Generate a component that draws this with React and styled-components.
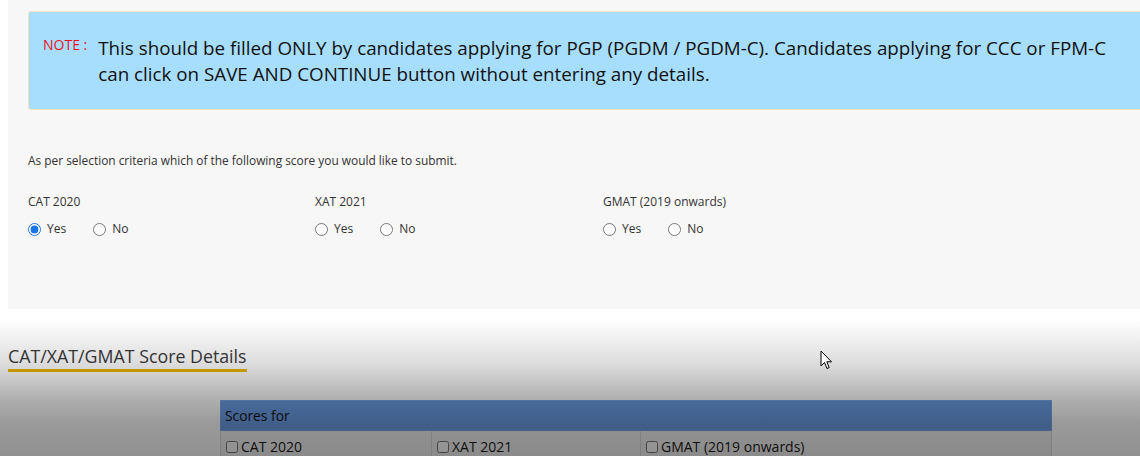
import React from "react";
import styled, { createGlobalStyle } from "styled-components";

const Global = createGlobalStyle`
  html, body { margin: 0; padding: 0; background: #fff; overflow: hidden; }
  body { font-family: "Open Sans", "Liberation Sans", sans-serif; width: 1140px; height: 456px; }
`;

const Page = styled.div`
  position: relative;
  width: 1140px;
  height: 456px;
  overflow: hidden;
  padding-left: 8px;
  box-sizing: border-box;
`;

const Panel = styled.section`
  width: 1160px;
  height: 309px;
  background: #f7f7f7;
  padding: 11px 0 0 20px;
  box-sizing: border-box;
`;

const Note = styled.div`
  width: 1130px;
  height: 99px;
  box-sizing: border-box;
  background: #a8defd;
  border: 1px solid #f3e3c4;
  border-radius: 3px;
  display: flex;
  padding: 23px 0 0 14px;
  gap: 11px;
`;

const NoteLabel = styled.span`
  color: #e8101c;
  font-size: 14px;
  line-height: 20px;
  white-space: nowrap;
`;

const NoteText = styled.p`
  margin: 0;
  width: 1030px;
  font-size: 18.8px;
  line-height: 26px;
  color: #111;
`;

const Prompt = styled.p`
  margin: 43px 0 0;
  font-size: 11.9px;
  line-height: 14px;
  color: #333;
`;

const Groups = styled.div`
  display: grid;
  grid-template-columns: 287px 288px 288px;
  margin-top: 27px;
`;

const Group = styled.div`
  display: flex;
  flex-direction: column;
  gap: 12px;
`;

const GroupLabel = styled.span`
  font-size: 12px;
  line-height: 16px;
  color: #333;
`;

const Options = styled.div`
  display: flex;
  gap: 27px;
  align-items: center;
`;

const Option = styled.label`
  display: flex;
  align-items: center;
  gap: 6px;
  font-size: 12px;
  line-height: 14px;
  color: #333;
`;

const Radio = styled.input`
  margin: 0;
  width: 13px;
  height: 13px;
  accent-color: #1a73e8;
`;

const Section = styled.section`
  padding-top: 36px;
`;

const Heading = styled.h2`
  display: inline-block;
  margin: 0;
  font-weight: 400;
  font-size: 17.8px;
  line-height: 22px;
  color: #3a3a3a;
  padding-bottom: 2px;
  border-bottom: 3px solid #eab800;
`;

const Table = styled.table`
  margin: 28px 0 0 212px;
  width: 831px;
  table-layout: fixed;
  border-collapse: collapse;
  font-size: 14px;
  color: #222;
`;

const HeadCell = styled.th`
  background: #6a9de5;
  text-align: left;
  font-weight: 400;
  font-size: 13.8px;
  height: 28px;
  padding: 0 4px 1px;
  border: 1px solid #7aa8e8;
  color: #111;
`;

const Cell = styled.td`
  background: #f3f3f3;
  border: 1px solid #dcdcdc;
  padding: 6px 5px 0;
  height: 22px;
  vertical-align: top;
`;

const CheckLabel = styled.label`
  display: inline-flex;
  align-items: center;
  gap: 3px;
  color: #1a1a1a;
`;

const Check = styled.input`
  margin: 0;
  width: 12px;
  height: 12px;
`;

const Shade = styled.div`
  position: absolute;
  left: 0;
  right: 0;
  top: 320px;
  bottom: 0;
  pointer-events: none;
  background: linear-gradient(
    to bottom,
    rgba(0, 0, 0, 0) 0px,
    rgba(0, 0, 0, 0.14) 45px,
    rgba(0, 0, 0, 0.32) 80px,
    rgba(0, 0, 0, 0.4) 105px,
    rgba(0, 0, 0, 0.43) 136px
  );
`;

const Cursor = styled.svg`
  position: absolute;
  left: 820px;
  top: 350px;
`;

const groups = [
  { name: "CAT 2020", checked: true },
  { name: "XAT 2021" },
  { name: "GMAT (2019 onwards)" },
];

const cols = [
  { name: "CAT 2020", w: 211 },
  { name: "XAT 2021", w: 209 },
  { name: "GMAT (2019 onwards)", w: 411 },
];

export default function App() {
  return (
    <>
      <Global />
      <Page>
        <Panel>
          <Note>
            <NoteLabel>NOTE :</NoteLabel>
            <NoteText>
              This should be filled ONLY by candidates applying for PGP (PGDM / PGDM-C). Candidates applying for CCC or FPM-C can click on SAVE AND CONTINUE button without entering any details.
            </NoteText>
          </Note>
          <Prompt>As per selection criteria which of the following score you would like to submit.</Prompt>
          <Groups>
            {groups.map((g) => (
              <Group key={g.name}>
                <GroupLabel>{g.name}</GroupLabel>
                <Options>
                  <Option>
                    <Radio type="radio" name={g.name} defaultChecked={!!g.checked} />
                    Yes
                  </Option>
                  <Option>
                    <Radio type="radio" name={g.name} />
                    No
                  </Option>
                </Options>
              </Group>
            ))}
          </Groups>
        </Panel>
        <Section>
          <Heading>CAT/XAT/GMAT Score Details</Heading>
          <Table>
            <colgroup>
              {cols.map((c) => (
                <col key={c.name} style={{ width: c.w }} />
              ))}
            </colgroup>
            <thead>
              <tr>
                <HeadCell colSpan={3}>Scores for</HeadCell>
              </tr>
            </thead>
            <tbody>
              <tr>
                {cols.map((c) => (
                  <Cell key={c.name}>
                    <CheckLabel><Check type="checkbox" />{c.name}</CheckLabel>
                  </Cell>
                ))}
              </tr>
            </tbody>
          </Table>
        </Section>
        <Shade />
        <Cursor width="14" height="22" viewBox="0 0 14 22">
          <path d="M1 1 L1 16 L4.5 12.5 L7 18.5 L9.2 17.6 L6.8 11.8 L11.5 11.8 Z" fill="#fff" stroke="#000" strokeWidth="1" strokeLinejoin="round" />
        </Cursor>
      </Page>
    </>
  );
}
